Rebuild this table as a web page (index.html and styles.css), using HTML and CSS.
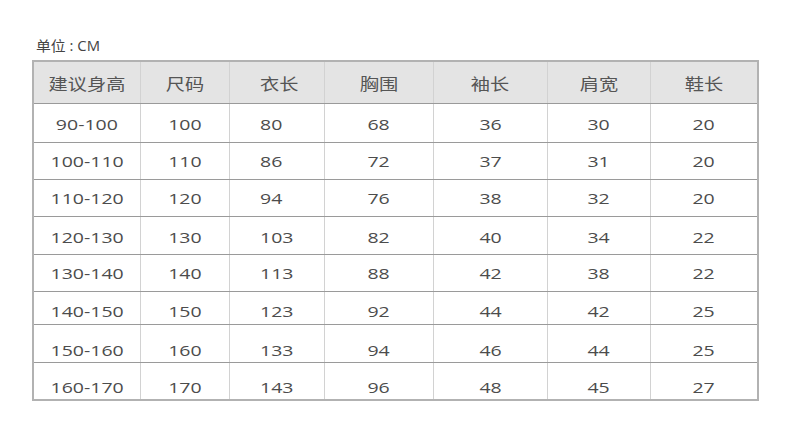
FILE: index.html
```html
<!DOCTYPE html>
<html lang="zh-CN">
<head>
<meta charset="utf-8">
<title>尺码表</title>
<link rel="stylesheet" href="styles.css">
</head>
<body>
<div class="page">
  <div class="unit"><span class="sx">单位 : CM</span></div>
  <div class="chart">
    <div class="row head">
      <div class="cell"><span class="sx">建议身高</span></div>
      <div class="cell"><span class="sx">尺码</span></div>
      <div class="cell left"><span class="sx">衣长</span></div>
      <div class="cell"><span class="sx">胸围</span></div>
      <div class="cell"><span class="sx">袖长</span></div>
      <div class="cell"><span class="sx">肩宽</span></div>
      <div class="cell"><span class="sx">鞋长</span></div>
    </div>
    <div class="row r1">
      <div class="cell"><span class="sx">90-100</span></div>
      <div class="cell"><span class="sx">100</span></div>
      <div class="cell left"><span class="sx">80</span></div>
      <div class="cell"><span class="sx">68</span></div>
      <div class="cell"><span class="sx">36</span></div>
      <div class="cell"><span class="sx">30</span></div>
      <div class="cell"><span class="sx">20</span></div>
    </div>
    <div class="row r2">
      <div class="cell"><span class="sx">100-110</span></div>
      <div class="cell"><span class="sx">110</span></div>
      <div class="cell left"><span class="sx">86</span></div>
      <div class="cell"><span class="sx">72</span></div>
      <div class="cell"><span class="sx">37</span></div>
      <div class="cell"><span class="sx">31</span></div>
      <div class="cell"><span class="sx">20</span></div>
    </div>
    <div class="row r3">
      <div class="cell"><span class="sx">110-120</span></div>
      <div class="cell"><span class="sx">120</span></div>
      <div class="cell left"><span class="sx">94</span></div>
      <div class="cell"><span class="sx">76</span></div>
      <div class="cell"><span class="sx">38</span></div>
      <div class="cell"><span class="sx">32</span></div>
      <div class="cell"><span class="sx">20</span></div>
    </div>
    <div class="row r4">
      <div class="cell"><span class="sx">120-130</span></div>
      <div class="cell"><span class="sx">130</span></div>
      <div class="cell left"><span class="sx">103</span></div>
      <div class="cell"><span class="sx">82</span></div>
      <div class="cell"><span class="sx">40</span></div>
      <div class="cell"><span class="sx">34</span></div>
      <div class="cell"><span class="sx">22</span></div>
    </div>
    <div class="row r5">
      <div class="cell"><span class="sx">130-140</span></div>
      <div class="cell"><span class="sx">140</span></div>
      <div class="cell left"><span class="sx">113</span></div>
      <div class="cell"><span class="sx">88</span></div>
      <div class="cell"><span class="sx">42</span></div>
      <div class="cell"><span class="sx">38</span></div>
      <div class="cell"><span class="sx">22</span></div>
    </div>
    <div class="row r6">
      <div class="cell"><span class="sx">140-150</span></div>
      <div class="cell"><span class="sx">150</span></div>
      <div class="cell left"><span class="sx">123</span></div>
      <div class="cell"><span class="sx">92</span></div>
      <div class="cell"><span class="sx">44</span></div>
      <div class="cell"><span class="sx">42</span></div>
      <div class="cell"><span class="sx">25</span></div>
    </div>
    <div class="row r7">
      <div class="cell"><span class="sx">150-160</span></div>
      <div class="cell"><span class="sx">160</span></div>
      <div class="cell left"><span class="sx">133</span></div>
      <div class="cell"><span class="sx">94</span></div>
      <div class="cell"><span class="sx">46</span></div>
      <div class="cell"><span class="sx">44</span></div>
      <div class="cell"><span class="sx">25</span></div>
    </div>
    <div class="row r8">
      <div class="cell"><span class="sx">160-170</span></div>
      <div class="cell"><span class="sx">170</span></div>
      <div class="cell left"><span class="sx">143</span></div>
      <div class="cell"><span class="sx">96</span></div>
      <div class="cell"><span class="sx">48</span></div>
      <div class="cell"><span class="sx">45</span></div>
      <div class="cell"><span class="sx">27</span></div>
    </div>
  </div>
</div>
</body>
</html>
```

FILE: styles.css
```css
* { box-sizing: border-box; }

html, body {
  margin: 0;
  padding: 0;
  background: #ffffff;
}

body {
  font-family: "Open Sans", "Noto Sans CJK SC", sans-serif;
  color: #4c4c4c;
}

.page {
  padding-top: 37px;
}

.unit {
  margin-left: 36px;
  height: 23px;
  font-size: 14px;
  line-height: 18px;
  color: #444444;
}

.unit .sx {
  transform: scaleX(1.06);
  transform-origin: left center;
}

.sx {
  display: inline-block;
  white-space: nowrap;
}

.chart {
  margin-left: 32px;
  width: 727px;
  border: 2px solid #b2b2b2;
}

.row {
  display: grid;
  grid-template-columns: 107px 89px 95px 109px 114px 103px 106px;
  border-bottom: 1px solid #9a9a9a;
}

.row:last-child {
  border-bottom: none;
}

.cell {
  border-right: 1px solid #d2d2d2;
  text-align: center;
  font-size: 15px;
  line-height: 20px;
}

.cell:last-child {
  border-right: none;
}

.cell .sx {
  transform: scaleX(1.3);
  transform-origin: center center;
}

.cell.left {
  text-align: left;
  padding-left: 30px;
}

.cell.left .sx {
  transform-origin: left center;
}

.head {
  height: 42px;
  background: #e4e4e4;
}

.head .cell {
  font-size: 16px;
  padding-top: 12px;
  color: #555555;
}

.head .cell .sx {
  transform: scaleX(1.2);
}

.r1 { height: 39px; }
.r2 { height: 37px; }
.r3 { height: 37px; }
.r4 { height: 38px; }
.r5 { height: 37px; }
.r6 { height: 33px; }
.r7 { height: 38px; }
.r8 { height: 36px; }

.r1 .cell { padding-top: 10px; }
.r2 .cell { padding-top: 8px; }
.r3 .cell { padding-top: 8px; }
.r4 .cell { padding-top: 10px; }
.r5 .cell { padding-top: 8px; }
.r6 .cell { padding-top: 9px; }
.r7 .cell { padding-top: 15px; }
.r8 .cell { padding-top: 14px; }
```
